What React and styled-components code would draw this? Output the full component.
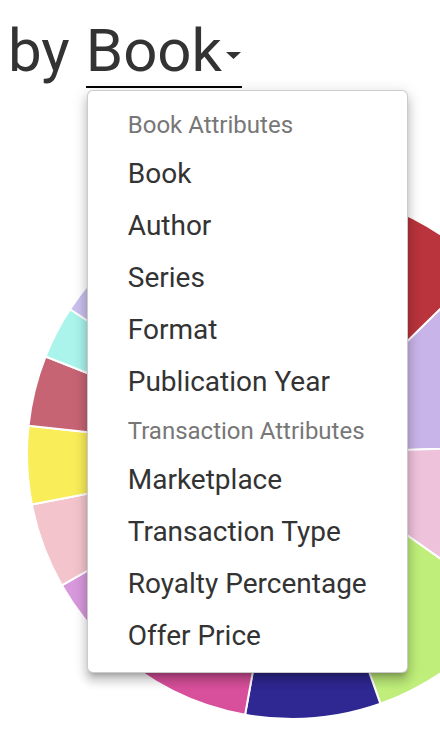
import React from 'react'
import styled, { createGlobalStyle } from 'styled-components'

const GlobalStyle = createGlobalStyle`
  html, body {
    margin: 0;
    padding: 0;
    background: #fff;
  }
  body {
    font-family: Roboto, "Noto Sans", "Liberation Sans", sans-serif;
    overflow: hidden;
  }
`

const Page = styled.div`
  position: relative;
  width: 440px;
  height: 730px;
  overflow: hidden;
`

const TitleRow = styled.div`
  display: flex;
  align-items: baseline;
  padding: 16px 0 0 8px;
  font-size: 60px;
  line-height: 70px;
  color: #333;
  position: relative;
  z-index: 2;
`

const Select = styled.div`
  position: relative;
  display: inline-flex;
  align-items: center;
  margin-left: 16px;
  border-bottom: 2px solid #000;
  cursor: pointer;
`

const Arrow = styled.svg`
  width: 15px;
  height: 7px;
  margin: 8px 1px 0 4px;
  flex: none;
`

const Menu = styled.ul`
  position: absolute;
  top: calc(100% + 4px);
  left: 1px;
  width: 321px;
  box-sizing: border-box;
  margin: 0;
  padding: 11px 0 10px;
  list-style: none;
  background: #fff;
  border: 1px solid rgba(0, 0, 0, 0.2);
  border-radius: 6px;
  box-shadow: 0 5px 5px -3px rgba(0, 0, 0, 0.2),
    0 8px 10px 1px rgba(0, 0, 0, 0.14),
    0 3px 14px 2px rgba(0, 0, 0, 0.12);
`

const MenuHeader = styled.li`
  padding-left: 40px;
  font-size: 24px;
  line-height: 46px;
  color: #777;
  white-space: nowrap;
`

const MenuItem = styled.li`
  padding-left: 40px;
  font-size: 28px;
  line-height: 52px;
  color: #333;
  white-space: nowrap;
`

const ChartArea = styled.div`
  margin-top: 101px;
  padding-left: 27px;
`

const groups = [
  { title: 'Book Attributes', items: ['Book', 'Author', 'Series', 'Format', 'Publication Year'] },
  { title: 'Transaction Attributes', items: ['Marketplace', 'Transaction Type', 'Royalty Percentage', 'Offer Price'] },
]

// angles in degrees, clockwise from 3 o'clock
const slices = [
  { from: 315.6, to: 358, color: '#c8b4e8' },
  { from: 358, to: 395.2, color: '#efc2dc' },
  { from: 35.2, to: 70.5, color: '#bfee7a' },
  { from: 70.5, to: 100.2, color: '#2f2792' },
  { from: 100.2, to: 133, color: '#d8509b' },
  { from: 133, to: 150.3, color: '#d898dc' },
  { from: 150.3, to: 169, color: '#f4c4cc' },
  { from: 169, to: 186.1, color: '#f9ed5a' },
  { from: 186.1, to: 201.6, color: '#c66474' },
  { from: 201.6, to: 213.1, color: '#aaf4ec' },
  { from: 213.1, to: 245, color: '#c9c0ee' },
  { from: 245, to: 290, color: '#8fb4e4' },
  { from: 290, to: 315.6, color: '#b9343c' },
]

const R = 265

const slicePath = (from, to) => {
  const a1 = (from * Math.PI) / 180
  const a2 = (to * Math.PI) / 180
  const x1 = R + R * Math.cos(a1)
  const y1 = R + R * Math.sin(a1)
  const x2 = R + R * Math.cos(a2)
  const y2 = R + R * Math.sin(a2)
  const large = to - from > 180 ? 1 : 0
  return `M${R},${R} L${x1},${y1} A${R},${R} 0 ${large} 1 ${x2},${y2} Z`
}

const PieChart = () => (
  <svg width={R * 2} height={R * 2} viewBox={`0 0 ${R * 2} ${R * 2}`}>
    {slices.map((s, i) => (
      <path key={i} d={slicePath(s.from, s.to)} fill={s.color} stroke="#fff" strokeWidth="2" strokeLinejoin="round" />
    ))}
  </svg>
)

export default function App() {
  return (
    <Page>
      <GlobalStyle />
      <TitleRow>
        <span>by</span>
        <Select>
          <span>Book</span>
          <Arrow viewBox="0 0 15 7">
            <path d="M0 0 L15 0 L7.5 7 Z" fill="#333" />
          </Arrow>
          <Menu>
            {groups.map(g => (
              <React.Fragment key={g.title}>
                <MenuHeader>{g.title}</MenuHeader>
                {g.items.map(item => (
                  <MenuItem key={item}>{item}</MenuItem>
                ))}
              </React.Fragment>
            ))}
          </Menu>
        </Select>
      </TitleRow>
      <ChartArea>
        <PieChart />
      </ChartArea>
    </Page>
  )
}
